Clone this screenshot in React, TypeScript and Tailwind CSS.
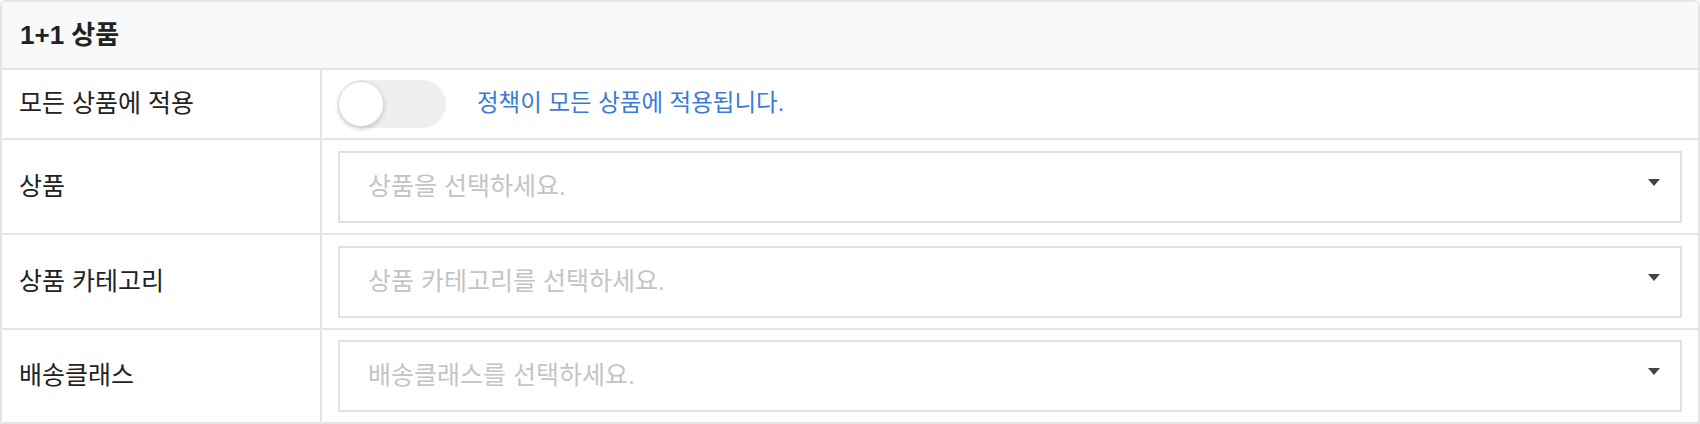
export default function App() {
  const rows = [
    { label: "상품", placeholder: "상품을 선택하세요.", h: "h-[95px] border-b-2" },
    { label: "상품 카테고리", placeholder: "상품 카테고리를 선택하세요.", h: "h-[95px] border-b-2" },
    { label: "배송클래스", placeholder: "배송클래스를 선택하세요.", h: "h-[92px]" },
  ];
  return (
    <div className="w-[1700px] h-[424px] bg-white font-['Liberation_Sans','Noto_Sans_CJK_KR',sans-serif]">
      <div className="w-full border-2 border-[#e5e5e5] rounded-t-[6px] overflow-hidden">
        <div className="h-[68px] bg-[#f8f9fb] flex items-center pl-[18px] text-[26px] font-bold text-[#222] border-b-2 border-[#e5e5e5]">
          1+1 상품
        </div>
        <div className="flex h-[70px] border-b-2 border-[#e5e5e5]">
          <div className="w-[320px] shrink-0 border-r-2 border-[#e5e5e5] flex items-center pl-[17px] text-[25px] text-[#222]">
            모든 상품에 적용
          </div>
          <div className="flex-1 flex items-center pl-[16px]">
            <div className="w-[108px] h-[48px] rounded-full bg-[#efefef] flex items-center">
              <div className="w-[46px] h-[46px] rounded-full bg-white border border-[#d9d9d9] shadow-[0_2px_4px_rgba(0,0,0,0.18)]" />
            </div>
            <span className="ml-[31px] text-[23.5px] text-[#3a7bd5]">정책이 모든 상품에 적용됩니다.</span>
          </div>
        </div>
        {rows.map((r) => (
          <div key={r.label} className={`flex border-[#e5e5e5] ${r.h}`}>
            <div className="w-[320px] shrink-0 border-r-2 border-[#e5e5e5] flex items-center pl-[17px] text-[25px] text-[#222]">
              {r.label}
            </div>
            <div className="flex-1 flex items-center px-[16px]">
              <div className="w-full h-[72px] border-2 border-[#e0e0e0] flex items-center justify-between pl-[28px] pr-[20px]">
                <span className="text-[25px] text-[#c4c4c4]">{r.placeholder}</span>
                <span className="mb-[9px] w-0 h-0 border-l-[6px] border-r-[6px] border-t-[7px] border-l-transparent border-r-transparent border-t-[#444]" />
              </div>
            </div>
          </div>
        ))}
      </div>
    </div>
  );
}
